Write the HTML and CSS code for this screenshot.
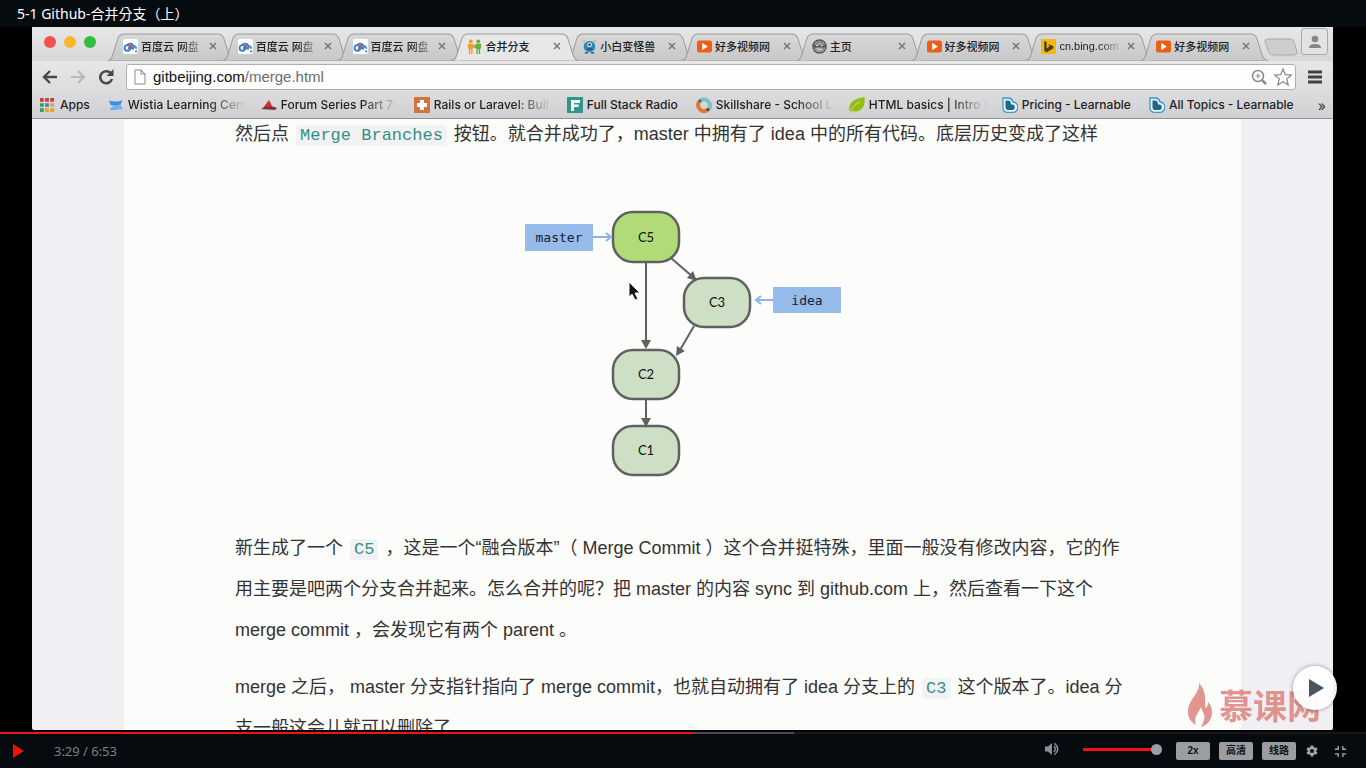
FILE: index.html
```html
<!DOCTYPE html>
<html lang="zh-CN">
<head>
<meta charset="utf-8">
<meta name="viewport" content="width=device-width, initial-scale=1">
<title>5-1 Github-合并分支（上）</title>
<link rel="stylesheet" href="styles.css">
</head>
<body>
<svg class="defs" aria-hidden="true">
  <defs>
    <linearGradient id="tabFill" x1="0" y1="0" x2="0" y2="1"><stop offset="0" stop-color="#d9d8d9"/><stop offset="1" stop-color="#c9c8c9"/></linearGradient>
    <symbol id="baidu" viewBox="0 0 16 16"><rect width="16" height="16" rx="2" fill="#fff"/><g fill="none" stroke-width="2"><circle cx="4.700" cy="9.500" r="3" stroke="#2f80d4"/><path d="M4.500 6.500a3.600 3.600 0 1 1 6 4L7 7.500" stroke="#3979c4"/><path d="M5.500 10.500l3.500-4" stroke="#d8404a"/><path d="M11 7.500c2 0 3 1.500 3 3" stroke="#3b8fe0"/></g><circle cx="14" cy="13.300" r="1.200" fill="#3b8fe0"/></symbol>
    <symbol id="people" viewBox="0 0 16 16"><g fill="#f29a2e"><circle cx="4" cy="2.500" r="2"/><path d="M1 5h6v5H6v6H4.500v-5h-1v5H2v-6H1z"/></g><g fill="#63b32e"><circle cx="12" cy="2.500" r="2"/><path d="M9 5h6v5h-1v6h-1.500v-5h-1v5H10v-6H9z"/><path d="M7 7h3v2H7z"/></g></symbol>
    <symbol id="monster" viewBox="0 0 16 16"><path d="M0 2l4-1-1 2z" fill="#c8a95c"/><path d="M16 2l-4-1 1 2z" fill="#c8a95c"/><ellipse cx="8" cy="8" rx="6.200" ry="6" fill="#2689bf"/><circle cx="8" cy="6" r="2.400" fill="#fff"/><circle cx="8" cy="6" r="1.300" fill="#223"/><path d="M5.500 10h5v1.500h-5zM3 14h3.500v1.500H3zM9.500 14H13v1.500H9.500z" fill="#174869"/></symbol>
    <symbol id="video" viewBox="0 0 16 16"><rect y="1.500" width="16" height="13" rx="2.500" fill="#ee5d12"/><path d="M5.500 4v8l6-4z" fill="#fff"/></symbol>
    <symbol id="face" viewBox="0 0 16 16"><circle cx="8" cy="8" r="7" fill="#aaa" stroke="#555" stroke-width="1.500"/><circle cx="8" cy="8" r="4.800" fill="none" stroke="#666"/><path d="M2 6h12v3H2z" fill="#555"/><path d="M4 7h3M9 7h3M5 11q3 2 6 0" stroke="#ddd" fill="none"/></symbol>
    <symbol id="bing" viewBox="0 0 16 16"><rect width="16" height="16" fill="#f5b60d"/><path d="M3.500 2l2.500 1v7l3-2-1.500-2.500L13 7.500V10l-7 4-2.500-1.500z" fill="#4b3c13"/></symbol>
    <symbol id="confluence" viewBox="0 0 16 16"><path d="M1 3.500c4 1.500 9 1.500 13.500-.500l-2 5C8 9.500 4 8.500 2.500 8z" fill="#3b8fe0"/><path d="M1.500 13c2-4 6-5 11.500-4.500l1.500 4c-4.500 0-9 1-13 .500z" fill="#6bb2f2"/></symbol>
    <symbol id="boat" viewBox="0 0 16 16"><path d="M8 3l4 8H2z" fill="#cf2e31"/><path d="M0 12c6-3 11-3 16-1l-2 2z" fill="#763239"/></symbol>
    <symbol id="railsq" viewBox="0 0 16 16"><rect width="16" height="16" fill="#cf7541"/><path d="M6 3h4v3h3v4h-3v3H6v-3H3V6h3z" fill="#fff"/></symbol>
    <symbol id="fullstack" viewBox="0 0 16 16"><rect width="16" height="16" fill="#31968f"/><path d="M4 3h9v3H7v1.500h4.500V10H7v4H4z" fill="#fff"/></symbol>
    <symbol id="skill" viewBox="0 0 16 16"><g fill="none" stroke-width="4"><path d="M3 5a6 6 0 0 1 10.500 1.500" stroke="#7fc2c5"/><path d="M13.700 6a6 6 0 0 1-2.200 7" stroke="#7fc2c5"/><path d="M11.500 13A6 6 0 0 1 3 5" stroke="#e27936"/></g><circle cx="3.800" cy="4" r="1.500" fill="#6b5a35"/><circle cx="12" cy="12.500" r="1.500" fill="#445"/></symbol>
    <symbol id="leaf" viewBox="0 0 16 16"><path d="M15.500 0c1 8-2 14-9 14.500L3 14l-2 2-.500-2C-1 5 5 2 15.500 0z" fill="#93bd12"/><path d="M1 15C4 9 7 7 11 5" stroke="#d0e578" fill="none"/></symbol>
    <symbol id="learn" viewBox="0 0 16 16"><path d="M1 1h6a5 5 0 0 1 4 4 5 5 0 0 1-.500 10.300H5A4.500 4.500 0 0 1 1 11z" fill="#e8f6fc" stroke="#4097c2" stroke-width="1.300"/><path d="M3.500 3.500H6q3 0 3 4h2a3 3 0 0 1 0 5.500H6q-2.500 0-2.500-3z" fill="#1d678f"/></symbol>
    <symbol id="cross" viewBox="0 0 8 8"><path d="M1 1l6 6M7 1L1 7" stroke="#777" stroke-width="1.500"/></symbol>
    <symbol id="tabShape" viewBox="0 0 128 26" preserveAspectRatio="none"><path d="M0 25.500C3 25.500 4 23 5 20L10 5Q12 1 16 1H111Q115 1 117 5L122 20Q124 25.500 128 25.500" stroke="#9c9b9c" stroke-width="1"/></symbol>
  </defs>
</svg>

<header class="title-bar"><h1 lang="zh-TW">5-1 Github-合并分支（上）</h1></header>

<main class="stage">
  <section class="browser">
    <div class="tab-strip">
      <div class="lights"><i class="red"></i><i class="amber"></i><i class="green"></i></div>
      <nav class="tabs">
        <div class="tab"><svg class="shape"><use href="#tabShape"/></svg><svg class="fav"><use href="#baidu"/></svg><span class="fade">百度云 网盘</span><button aria-label="关闭"><svg><use href="#cross"/></svg></button></div>
        <div class="tab"><svg class="shape"><use href="#tabShape"/></svg><svg class="fav"><use href="#baidu"/></svg><span class="fade">百度云 网盘</span><button aria-label="关闭"><svg><use href="#cross"/></svg></button></div>
        <div class="tab"><svg class="shape"><use href="#tabShape"/></svg><svg class="fav"><use href="#baidu"/></svg><span class="fade">百度云 网盘</span><button aria-label="关闭"><svg><use href="#cross"/></svg></button></div>
        <div class="tab active"><svg class="shape"><use href="#tabShape"/></svg><svg class="fav"><use href="#people"/></svg><span>合并分支</span><button aria-label="关闭"><svg><use href="#cross"/></svg></button></div>
        <div class="tab"><svg class="shape"><use href="#tabShape"/></svg><svg class="fav"><use href="#monster"/></svg><span>小白变怪兽</span><button aria-label="关闭"><svg><use href="#cross"/></svg></button></div>
        <div class="tab"><svg class="shape"><use href="#tabShape"/></svg><svg class="fav"><use href="#video"/></svg><span>好多视频网</span><button aria-label="关闭"><svg><use href="#cross"/></svg></button></div>
        <div class="tab"><svg class="shape"><use href="#tabShape"/></svg><svg class="fav"><use href="#face"/></svg><span>主页</span><button aria-label="关闭"><svg><use href="#cross"/></svg></button></div>
        <div class="tab"><svg class="shape"><use href="#tabShape"/></svg><svg class="fav"><use href="#video"/></svg><span>好多视频网</span><button aria-label="关闭"><svg><use href="#cross"/></svg></button></div>
        <div class="tab"><svg class="shape"><use href="#tabShape"/></svg><svg class="fav"><use href="#bing"/></svg><span class="fade">cn.bing.com</span><button aria-label="关闭"><svg><use href="#cross"/></svg></button></div>
        <div class="tab"><svg class="shape"><use href="#tabShape"/></svg><svg class="fav"><use href="#video"/></svg><span>好多视频网</span><button aria-label="关闭"><svg><use href="#cross"/></svg></button></div>
      </nav>
      <button class="new-tab" aria-label="新标签页"><svg viewBox="0 0 34 18"><path d="M4 1h22q3 0 4 3l3 10q0 3-3 3H9q-3 0-4-3L1 4q0-3 3-3z" fill="#cfcecf" stroke="#aaa9aa"/></svg></button>
      <button class="user" aria-label="用户"><svg viewBox="0 0 14 14"><circle cx="7" cy="4" r="3.300"/><path d="M1 13q0-4 6-4t6 4z"/></svg></button>
    </div>

    <div class="toolbar">
      <button aria-label="后退"><svg viewBox="0 0 16 16"><path d="M15 8H2M8 2L2 8l6 6" fill="none" stroke="#484848" stroke-width="2.400"/></svg></button>
      <button aria-label="前进"><svg viewBox="0 0 16 16"><path d="M1 8h13M8 2l6 6-6 6" fill="none" stroke="#b9b8b9" stroke-width="2.200"/></svg></button>
      <button aria-label="刷新"><svg viewBox="0 0 16 16"><path d="M12.500 4A6 6 0 1 0 14 10" fill="none" stroke="#484848" stroke-width="2.500"/><path d="M15.500 0v7H8.500z" fill="#484848"/></svg></button>
      <div class="omnibox">
        <svg class="page" viewBox="0 0 12 16"><path d="M1 1h6l4 4v10H1zM7 1v4h4" fill="#fff" stroke="#8a8a8a"/></svg>
        <a class="url" href="#">gitbeijing.com<span>/merge.html</span></a>
        <svg class="tool" viewBox="0 0 16 16"><g fill="none" stroke="#8c8c8c"><circle cx="7" cy="7" r="5.500" stroke-width="1.500"/><path d="M11 11l4 4" stroke-width="2.500"/><path d="M4.500 7h5M7 4.500v5"/></g></svg>
        <svg class="star" viewBox="0 0 18 18"><path d="M9 1l2.300 5.600 6 .400-4.600 3.900 1.500 6L9 13.700 3.800 16.900l1.500-6L.700 7l6-.400z" fill="#fff" stroke="#858585" stroke-width="1.200"/></svg>
      </div>
      <button class="menu" aria-label="菜单"><svg viewBox="0 0 14 14"><path d="M0 2h14M0 7h14M0 12h14" stroke="#414141" stroke-width="3"/></svg></button>
    </div>

    <nav class="bookmarks">
      <a class="apps" href="#"><svg viewBox="0 0 15 15"><path d="M0 0h4v4H0zM5.500 0h4v4h-4zM11 0h4v4h-4z" fill="#c84242"/><path d="M0 5.500h4v4H0z" fill="#42985a"/><path d="M5.500 5.500h4v4h-4z" fill="#4180cf"/><path d="M11 5.500h4v4h-4z" fill="#e0a72c"/><path d="M0 11h4v4H0z" fill="#42985a"/><path d="M5.500 11h4v4h-4zM11 11h4v4h-4z" fill="#e0a72c"/></svg><span>Apps</span></a>
      <a class="wide" href="#"><svg><use href="#confluence"/></svg><span>Wistia Learning Cent</span></a>
      <a class="wide" href="#"><svg><use href="#boat"/></svg><span>Forum Series Part 7:</span></a>
      <a class="wide" href="#"><svg><use href="#railsq"/></svg><span>Rails or Laravel: Buil</span></a>
      <a href="#"><svg><use href="#fullstack"/></svg><span>Full Stack Radio</span></a>
      <a class="wide" href="#"><svg><use href="#skill"/></svg><span>Skillshare - School L</span></a>
      <a class="wide" href="#"><svg><use href="#leaf"/></svg><span>HTML basics | Intro t</span></a>
      <a href="#"><svg><use href="#learn"/></svg><span>Pricing - Learnable</span></a>
      <a href="#"><svg><use href="#learn"/></svg><span>All Topics - Learnable</span></a>
      <button class="more" aria-label="更多书签">»</button>
    </nav>

    <div class="page-view">
      <article class="article">
        <p>然后点 <code>Merge Branches</code> 按钮。就合并成功了，master 中拥有了 idea 中的所有代码。底层历史变成了这样</p>
        <svg class="graph" viewBox="0 0 320 270" role="img" aria-label="合并后的提交历史">
          <g fill="none" stroke="#606060" stroke-width="2">
            <path d="M123 54v80M123 192v20M148 50l22 19M171 118l-14 24"/>
          </g>
          <g fill="#606060">
            <path d="M118 132h10l-5 9zM118 210h10l-5 9zM174 73l-10-3 6-7zM153 148l1-10 8 5z"/>
          </g>
          <g stroke="#606060" stroke-width="2.500">
            <rect class="head" x="90" y="4" width="66" height="50" rx="20"/>
            <rect class="commit" x="161" y="70" width="66" height="49" rx="20"/>
            <rect class="commit" x="90" y="142" width="66" height="49" rx="20"/>
            <rect class="commit" x="90" y="218" width="66" height="49" rx="20"/>
          </g>
          <g fill="#96baea"><rect x="2" y="16" width="68" height="27"/><rect x="250" y="79" width="68" height="26"/></g>
          <g fill="none" stroke="#8db3e6" stroke-width="2"><path d="M70 29h18M83 25l5 4-5 4M250 92h-17M238 88l-5 4 5 4"/></g>
          <g class="commit-name"><text x="123" y="34">C5</text><text x="194" y="99">C3</text><text x="123" y="171">C2</text><text x="123" y="247">C1</text></g>
          <g class="branch-name"><text x="36" y="34">master</text><text x="284" y="97">idea</text></g>
          <path d="M106 74v15l3-3 3 6 3-1-3-6h5z" fill="#111" stroke="#fff" stroke-width="1"/>
        </svg>
        <p>新生成了一个 <code>C5</code> ，这是一个“融合版本”（ Merge Commit ）这个合并挺特殊，里面一般没有修改内容，它的作<br>用主要是吧两个分支合并起来。怎么合并的呢？把 master 的内容 sync 到 github.com 上，然后查看一下这个<br>merge commit ，会发现它有两个 parent 。</p>
        <p>merge 之后， master 分支指针指向了 merge commit，也就自动拥有了 idea 分支上的 <code>C3</code> 这个版本了。idea 分<br>支一般这会儿就可以删除了。</p>
      </article>
    </div>
  </section>
  <div class="watermark">
    <svg viewBox="0 0 26 44"><path d="M12 0C13 11 1 16 1 29c0 6 3 10 8 13-3-9 3-12 5-18 1 5 5 8 3 13-1 3-2 5-3 7 7-2 11-8 11-15 0-4-1-7-4-10 0 4-1 5-3 6C19 15 18 6 12 0z" fill="#de8a85"/></svg>
    <span>慕课网</span>
  </div>
  <button class="float-play" aria-label="播放"><svg viewBox="0 0 16 18"><path d="M1 0v18l15-9z" fill="#49545e"/></svg></button>
</main>

<footer class="player">
  <input class="seek" type="range" min="0" max="413" value="209" aria-label="播放进度">
  <div class="controls">
    <button class="play" aria-label="播放"><svg viewBox="0 0 11 14"><path d="M0 0v14l11-7z" fill="#f01400"/></svg></button>
    <span class="time">3:29 / 6:53</span>
    <div class="sound">
      <button class="mute" aria-label="静音"><svg viewBox="0 0 14 14"><path d="M0 4.500h3L7 1v12L3 9.500H0z" fill="#8b9095"/><path d="M9 4q2.500 3 0 6M9.500 1.200q6.500 5.800 0 11.600" fill="none" stroke="#8b9095" stroke-width="1.500"/></svg></button>
      <input class="volume" type="range" min="0" max="100" value="100" aria-label="音量">
    </div>
    <div class="chips"><button>2x</button><button>高清</button><button>线路</button></div>
    <button class="gear" aria-label="设置"><svg viewBox="0 0 24 24"><path fill="#a4a7aa" fill-rule="evenodd" d="M9.500 1h5l.700 3.400 2 1.200 3.400-1.100 2.500 4.300-2.700 2.300v1.800l2.700 2.300-2.500 4.300-3.400-1.100-2 1.200-.700 3.400h-5l-.700-3.400-2-1.200-3.400 1.100L.900 15.200l2.700-2.300v-1.800L.900 8.800l2.500-4.300 3.400 1.100 2-1.200zM12 8a4 4 0 1 0 0 8 4 4 0 0 0 0-8z"/></svg></button>
    <button class="shrink" aria-label="退出全屏"><svg viewBox="0 0 14 14"><path d="M1 4.500h3.500V1M9.500 1v3.500H13M1 9.500h3.500V13M9.500 13V9.500H13" fill="none" stroke="#a4a7aa" stroke-width="1.500"/></svg></button>
  </div>
</footer>
</body>
</html>
```
FILE: styles.css
```css
* { box-sizing: border-box; }
body {
  margin: 0;
  height: 100vh;
  display: flex;
  flex-direction: column;
  overflow: hidden;
  background: #000;
  font-family: "Liberation Sans", "Noto Sans CJK SC", sans-serif;
  text-spacing-trim: space-all;
}
svg { display: block; flex: none; }
button { border: 0; padding: 0; background: none; font-family: inherit; display: flex; align-items: center; justify-content: center; flex: none; }
a { color: inherit; text-decoration: none; }
.defs { position: absolute; width: 0; height: 0; }

.title-bar { flex: none; height: 27px; padding: 0 17px; background: #060b10; display: flex; align-items: center; }
.title-bar h1 { margin: 0; font: 400 14px/27px "Noto Sans", "Noto Sans CJK TC", sans-serif; color: #fff; }

.stage { flex: 1; min-height: 0; position: relative; display: flex; padding: 0 33px 2px 32px; }
.browser { flex: 1; min-width: 0; display: flex; flex-direction: column; overflow: hidden; background: #f1eff3; border-radius: 0 0 2px 2px; }

.tab-strip { flex: none; height: 34px; display: flex; align-items: flex-end; padding-right: 5px; background: linear-gradient(#e8e7e8, #d9d8d9); }
.lights { flex: none; width: 76px; height: 34px; display: flex; gap: 8px; padding: 9px 0 0 12px; }
.lights i { width: 12px; height: 12px; border-radius: 50%; }
.red { background: #f0534f; }
.amber { background: #f6b62f; }
.green { background: #2dbd3f; }
.tabs { flex: 1; min-width: 0; display: flex; padding-right: 8px; box-shadow: inset 0 -1px #9c9b9c; }
.tab { position: relative; flex: 1; min-width: 0; height: 28px; margin-right: -12px; padding: 0 18px 2px 15px; display: flex; align-items: center; gap: 3px; font-size: 11px; color: #222; }
.tab .shape { position: absolute; left: 0; top: 0; width: 100%; height: 28px; fill: url(#tabFill); }
.tab.active { z-index: 1; }
.tab.active .shape { fill: #e8e7e8; }
.tab .fav { position: relative; width: 15px; height: 15px; }
.tab span { position: relative; flex: 1; min-width: 0; overflow: hidden; white-space: nowrap; font-weight: 500; }
.tab .fade { -webkit-mask-image: linear-gradient(90deg, #000 40px, transparent 64px); mask-image: linear-gradient(90deg, #000 40px, transparent 64px); }
.tab button { position: relative; width: 8px; height: 8px; }
.tab button svg { width: 8px; height: 8px; }
.new-tab { width: 34px; height: 28px; }
.new-tab svg { width: 34px; height: 18px; }
.user { width: 27px; height: 27px; margin: 0 0 6px 3px; border: 1px solid #aaa9aa; border-radius: 3px; background: #e4e3e4; }
.user svg { width: 14px; height: 14px; fill: #858585; }

.toolbar { flex: none; height: 31px; display: flex; align-items: center; gap: 12px; padding: 0 11px 0 10px; background: linear-gradient(#e8e7e8, #dddcdd); }
.toolbar button svg { width: 16px; height: 16px; }
.omnibox { flex: 1; height: 26px; display: flex; align-items: center; gap: 7px; padding: 0 3px 0 7px; background: #fdfdfd; border: 1px solid #b0afb0; border-radius: 3px; }
.page { width: 12px; height: 16px; }
.url { flex: 1; font-size: 15px; line-height: 24px; color: #111; }
.url span { color: #6d6d6d; }
.tool { width: 16px; height: 16px; }
.star { width: 18px; height: 18px; }
.toolbar .menu svg { width: 14px; height: 14px; }

.bookmarks { flex: none; height: 27px; display: flex; align-items: center; gap: 18px; padding: 0 7px 0 8px; background: linear-gradient(#dddcdd, #d0cfd1); border-bottom: 1px solid #929192; font: 500 12px/16px Inter, sans-serif; color: #222; }
.bookmarks a { flex: none; display: flex; align-items: center; gap: 4px; white-space: nowrap; }
.bookmarks svg { width: 16px; height: 16px; }
.bookmarks .apps { gap: 6px; }
.bookmarks .apps svg { width: 14px; height: 14px; }
.bookmarks .wide { width: 135px; }
.wide span { -webkit-mask-image: linear-gradient(90deg, #000 80px, transparent 118px); mask-image: linear-gradient(90deg, #000 80px, transparent 118px); }
.bookmarks .more { margin-left: auto; font-size: 14px; color: #333; }

.page-view { flex: 1; min-height: 0; overflow: hidden; padding: 0 92px; }
.article { min-height: 100%; padding: 0 0 0 111px; background: #fcfcfb; color: #333; font-size: 18px; line-height: 41px; white-space: nowrap; }
.article p { margin: 0 0 16px; }
.article p:first-child { margin-top: -5px; }
code { margin: 0 2px; padding: 1px 4px; border-radius: 3px; background: #f2f1f4; color: #35907e; font: 17px/20px "Liberation Mono", monospace; }
.graph { width: 320px; height: 270px; margin: 53px auto 50px 288px; }
.head { fill: #b0db77; }
.commit { fill: #cddfc4; }
.commit-name { font: 13px Lato, sans-serif; text-anchor: middle; fill: #111; }
.branch-name { font: 13px "DejaVu Sans Mono", monospace; text-anchor: middle; fill: #152033; }

.watermark { position: absolute; right: 45px; bottom: 3px; display: flex; align-items: center; gap: 6px; color: #de8a85; font: 700 34px/48px "Noto Sans CJK SC", sans-serif; opacity: 0.9; }
.watermark svg { width: 26px; height: 44px; }
.float-play { position: absolute; right: 29px; bottom: 22px; width: 44px; height: 44px; border-radius: 50%; background: rgba(255, 255, 255, 0.95); box-shadow: 0 0 4px rgba(0, 0, 0, 0.4); }
.float-play svg { width: 16px; height: 18px; margin-left: 2px; }

.player { flex: none; background: #060b10; display: flex; flex-direction: column; }
input[type="range"] { -webkit-appearance: none; appearance: none; margin: 0; border: 0; background: none; }
.seek { display: block; width: 100%; height: 2px; }
.player .seek { background: linear-gradient(90deg, #f01414 0 50.700%, #4a4d52 50.700% 58.100%, #1c1619 58.100%); }
.seek::-webkit-slider-thumb { -webkit-appearance: none; width: 1px; height: 1px; opacity: 0; }
.controls { height: 34px; display: flex; align-items: center; padding: 0 19px 0 13px; }
.play svg { width: 11px; height: 14px; }
.time { flex: 1; margin-left: 30px; font: 13px/20px "Open Sans", sans-serif; color: #81868b; }
.sound { display: flex; align-items: center; gap: 24px; margin-right: 14px; padding-bottom: 4px; }
.mute svg { width: 14px; height: 14px; }
.player .volume { width: 79px; height: 12px; background: linear-gradient(#f01414, #f01414) left center / 74px 3px no-repeat; }
.volume::-webkit-slider-thumb { -webkit-appearance: none; width: 11px; height: 11px; border-radius: 50%; background: #9a9fa9; }
.chips { display: flex; gap: 9px; }
.chips button { width: 34px; height: 18px; border-radius: 2px; background: #9b9da0; color: #111; font: 700 10px/18px "Liberation Sans", "Noto Sans CJK SC", sans-serif; }
.gear { margin: 0 16px 0 10px; }
.gear svg { width: 12px; height: 12px; }
.shrink svg { width: 13px; height: 13px; }
```
